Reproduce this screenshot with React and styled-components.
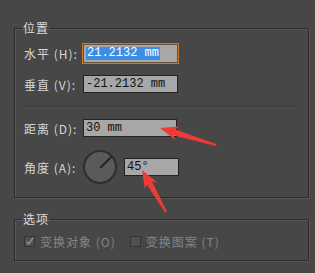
import styled, { createGlobalStyle } from 'styled-components'

const GlobalStyle = createGlobalStyle`
  html, body {
    margin: 0;
    padding: 0;
    background: #474747;
  }
  body {
    font-family: "Noto Sans CJK SC", "Noto Sans", sans-serif;
  }
`

const Panel = styled.div`
  position: relative;
  width: 315px;
  height: 273px;
  box-sizing: border-box;
  padding: 21px 0 0 14px;
  overflow: hidden;
`

const Group = styled.fieldset`
  width: 295px;
  box-sizing: border-box;
  margin: ${p => p.$top || 0}px 0 0 0;
  padding: ${p => p.$pad};
  border: 1px solid #2c2c2c;
  box-shadow: inset 1px 1px 0 #575757, 1px 1px 0 #575757;
  min-width: 0;
`

const Legend = styled.legend`
  padding: 0 1px;
  margin-left: -2px;
  font-size: 12px;
  line-height: 14px;
  color: #dcdcdc;
  letter-spacing: 1px;
`

const Stack = styled.div`
  display: flex;
  flex-direction: column;
`

const Row = styled.div`
  display: flex;
  align-items: center;
  height: ${p => p.$h}px;
  margin-top: ${p => p.$gap || 0}px;
`

const Label = styled.span`
  width: 59px;
  flex: none;
  font-size: 12px;
  color: #d6d6d6;
  letter-spacing: 1px;
  white-space: nowrap;
`

const Field = styled.div`
  box-sizing: border-box;
  width: ${p => p.$w}px;
  height: ${p => (p.$focus ? 21 : 18)}px;
  margin-left: ${p => p.$ml || 0}px;
  display: flex;
  align-items: center;
  padding-left: ${p => (p.$focus ? 3 : 2)}px;
  background: #a7a7a7;
  border: 1px solid ${p => (p.$focus ? '#c9792c' : '#222')};
  box-shadow: ${p => (p.$focus ? 'inset 0 0 0 1px #6b5236' : 'none')};
  font-family: "Liberation Mono", "DejaVu Sans Mono", monospace;
  font-size: 12px;
  color: #111;
  white-space: pre;
`

const Selected = styled.span`
  background: #3a8ee6;
  color: #fff;
  line-height: 13px;
  padding: 0 1px;
`

const Divider = styled.div`
  height: 0;
  margin: 13px 0 0 -1px;
  border-top: 1px solid #3a3a3a;
  border-bottom: 1px solid #545454;
`

const Dial = styled.div`
  position: relative;
  width: 34px;
  height: 34px;
  flex: none;
  box-sizing: border-box;
  border-radius: 50%;
  border: 2px solid #2e2e2e;
  background: #5a5a5a;
`

const Needle = styled.div`
  position: absolute;
  left: 15px;
  top: 15px;
  width: 16px;
  height: 1.5px;
  background: #222;
  transform-origin: 0 50%;
  transform: rotate(-45deg);
`

const Options = styled.div`
  display: flex;
  align-items: center;
  height: 12px;
`

const Check = styled.span`
  width: 11px;
  height: 11px;
  flex: none;
  box-sizing: border-box;
  border: 1px solid #333;
  background: #505050;
  margin-left: ${p => p.$ml || 0}px;
  display: flex;
  align-items: center;
  justify-content: center;
`

const OptionText = styled.span`
  margin-left: 5px;
  font-size: 12px;
  color: #858585;
  letter-spacing: 1px;
  white-space: nowrap;
`

const Overlay = styled.svg`
  position: absolute;
  left: 0;
  top: 0;
  pointer-events: none;
`

function Arrow({ tip, tail, len = 18, barb = 7, neck = 3 }) {
  const dx = tail[0] - tip[0]
  const dy = tail[1] - tip[1]
  const d = Math.hypot(dx, dy)
  const ux = dx / d
  const uy = dy / d
  const px = -uy
  const py = ux
  const at = (t, s) => [tip[0] + ux * t + px * s, tip[1] + uy * t + py * s]
  const pts = [
    tip,
    at(len, barb),
    at(len - 3, neck),
    at(d, 1),
    at(d, -1),
    at(len - 3, -neck),
    at(len, -barb),
  ]
  return <polygon points={pts.map(p => p.join(',')).join(' ')} fill="#ef3b36" />
}

export default function App() {
  return (
    <>
      <GlobalStyle />
      <Panel>
        <Group $pad="0 10px 13px 9px">
          <Legend>位置</Legend>
          <Stack>
            <Row $h={21} $gap={8}>
              <Label>水平 (H):</Label>
              <Field $w={97} $focus $ml={-1}>
                <Selected>21.2132 mm</Selected>
              </Field>
            </Row>
            <Row $h={18} $gap={11}>
              <Label>垂直 (V):</Label>
              <Field $w={95}>-21.2132 mm</Field>
            </Row>
            <Divider />
            <Row $h={18} $gap={11}>
              <Label>距离 (D):</Label>
              <Field $w={94}>30 mm</Field>
            </Row>
            <Row $h={34} $gap={13}>
              <Label>角度 (A):</Label>
              <Dial>
                <Needle />
              </Dial>
              <Field $w={55} $ml={7}>45°</Field>
            </Row>
          </Stack>
        </Group>
        <Group $top={14} $pad="9px 10px 13px 9px">
          <Legend>选项</Legend>
          <Options>
            <Check>
              <svg width="11" height="11" viewBox="0 0 11 11">
                <path d="M2 5.5 L4.5 8.5 L10 1" fill="none" stroke="#8a8a8a" strokeWidth="2" />
              </svg>
            </Check>
            <OptionText>变换对象 (O)</OptionText>
            <Check $ml={14} />
            <OptionText>变换图案 (T)</OptionText>
          </Options>
        </Group>
        <Overlay width="315" height="273" viewBox="0 0 315 273">
          <Arrow tip={[160, 128]} tail={[216, 145]} />
          <Arrow tip={[142, 170]} tail={[166, 212]} />
        </Overlay>
      </Panel>
    </>
  )
}
